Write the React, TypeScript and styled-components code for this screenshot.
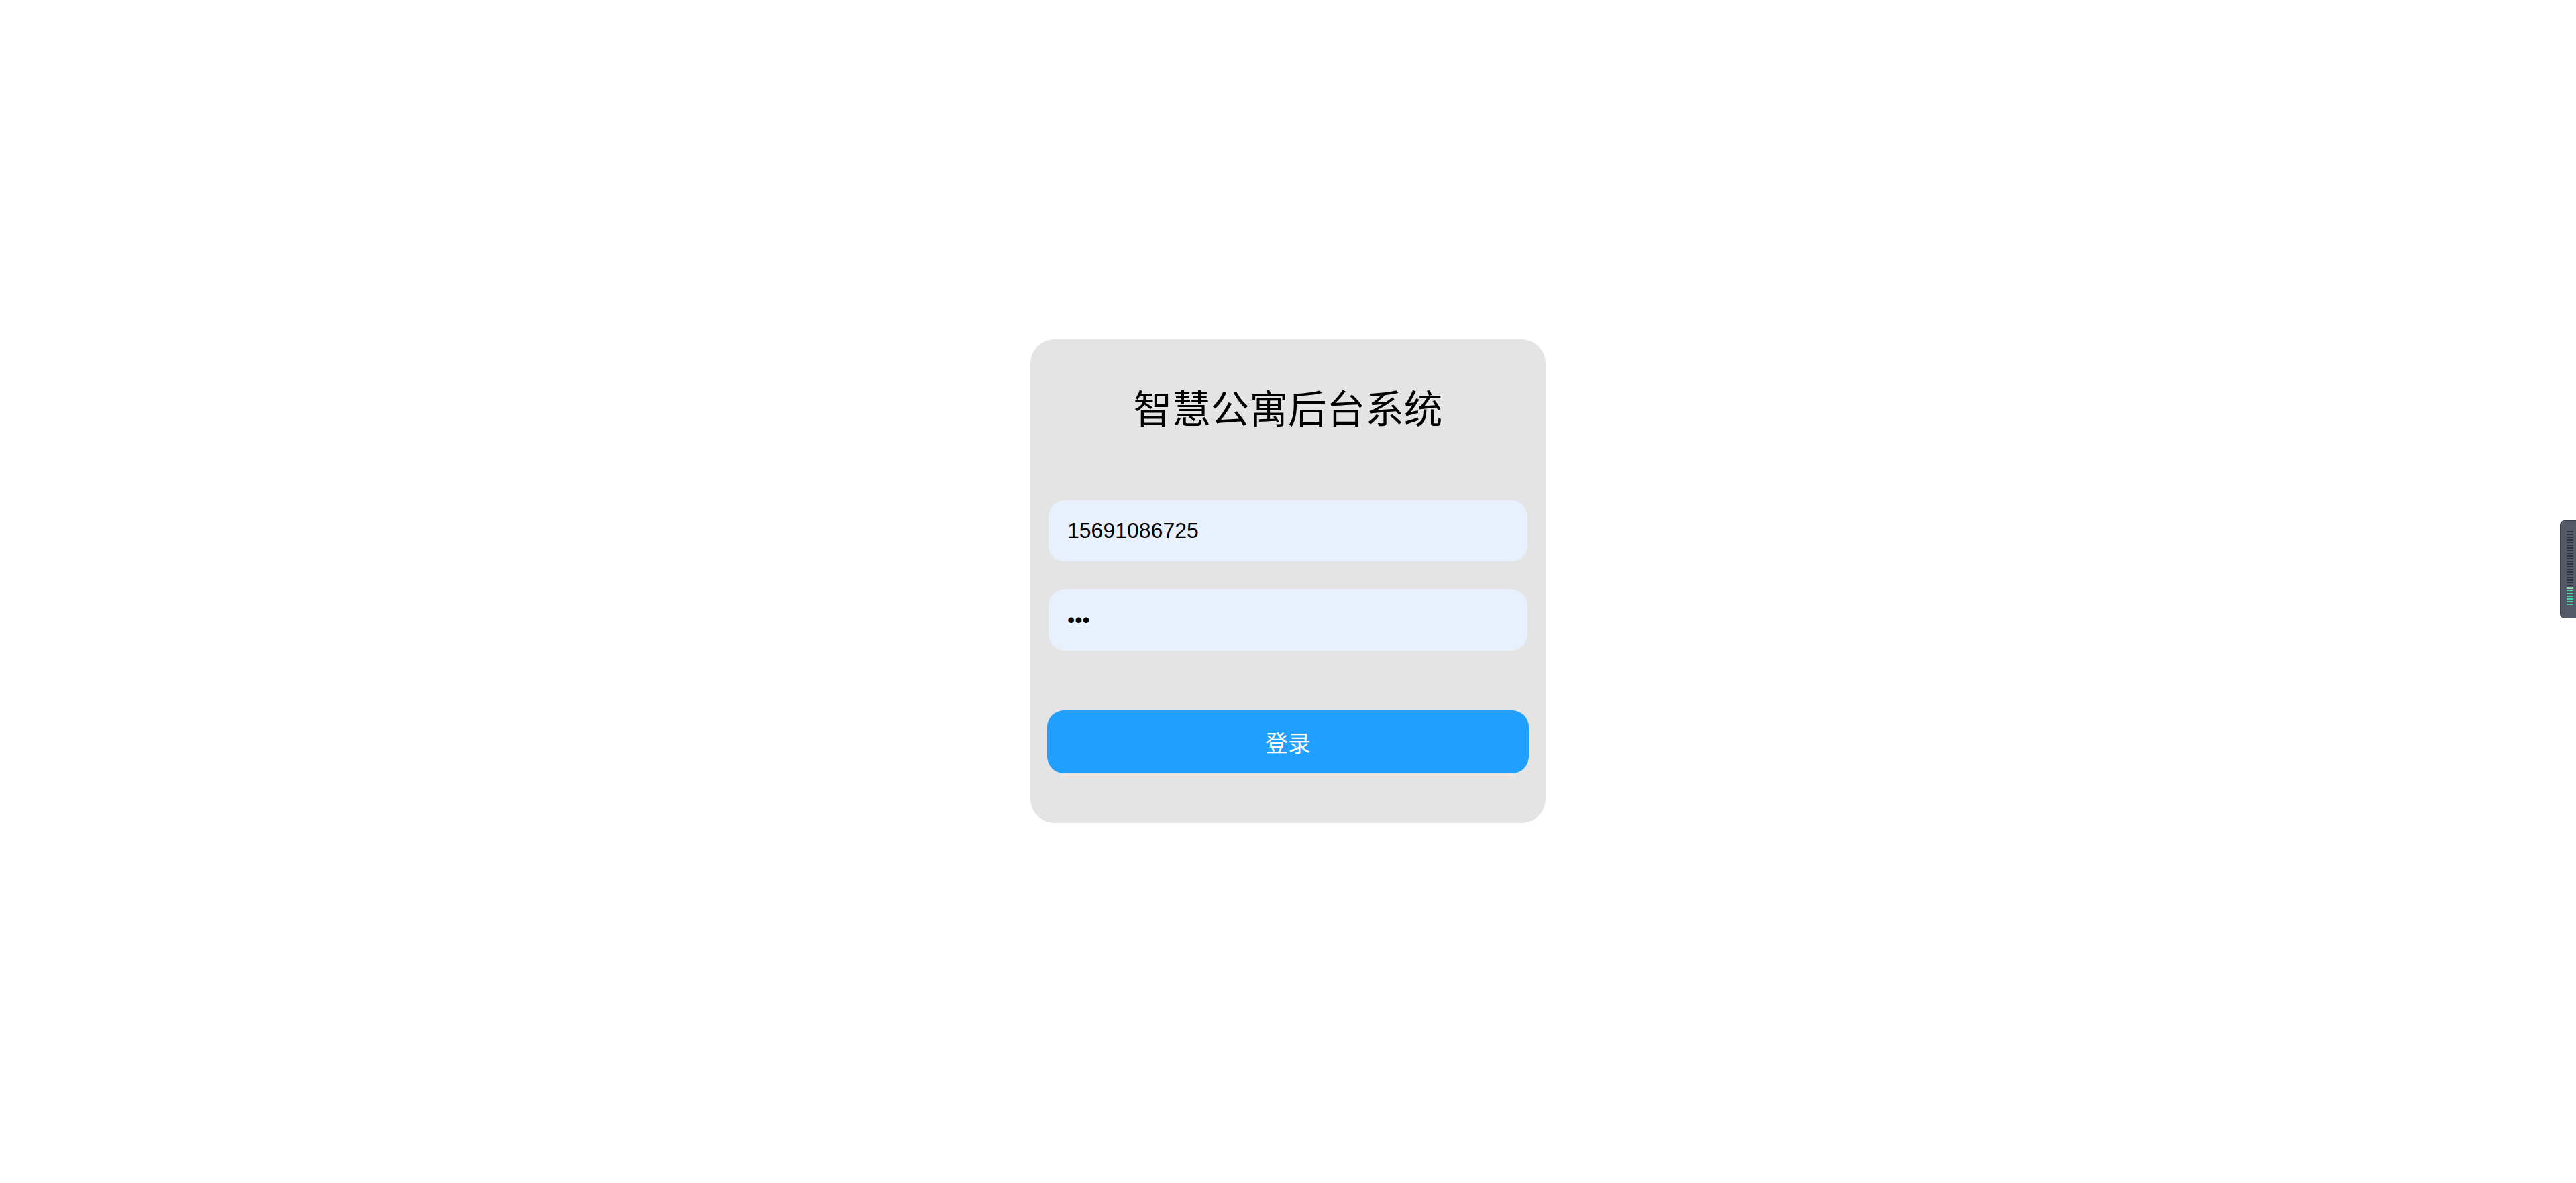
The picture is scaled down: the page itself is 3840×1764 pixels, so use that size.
import * as React from 'react'
import styled, { createGlobalStyle } from 'styled-components'

const GlobalStyle = createGlobalStyle`
  html, body {
    margin: 0;
    padding: 0;
    background: #ffffff;
  }
  body {
    font-family: 'Liberation Sans', 'Noto Sans CJK SC', sans-serif;
  }
`

const Page = styled.div`
  display: flex;
  justify-content: center;
  align-items: flex-start;
  padding-top: 506px;
  min-height: 1764px;
  box-sizing: border-box;
`

const LoginCard = styled.form`
  width: 768px;
  box-sizing: border-box;
  display: flex;
  flex-direction: column;
  padding: 71px 27px 74px;
  background: #e4e4e4;
  border-radius: 36px;
`

const Title = styled.h2`
  margin: 0 0 111px;
  font-family: 'Noto Sans CJK SC', sans-serif;
  font-weight: 400;
  font-size: 57.6px;
  line-height: 58px;
  text-align: center;
  color: #000000;
`

const Fields = styled.div`
  display: flex;
  flex-direction: column;
  gap: 42px;
`

const Field = styled.input`
  height: 91px;
  width: 100%;
  box-sizing: border-box;
  padding: 0 28px;
  border: none;
  outline: none;
  border-radius: 24px;
  background: #e8f0fe;
  font-family: 'Liberation Sans', Arial, sans-serif;
  font-size: 32px;
  color: #000000;
`

const SubmitButton = styled.button`
  margin: 89px -2px 0;
  height: 94px;
  border: none;
  border-radius: 25px;
  background: #1fa0ff;
  color: #ffffff;
  font-family: 'Noto Sans CJK SC', sans-serif;
  font-size: 34px;
  cursor: pointer;
`

const MeterWidget = styled.div`
  position: fixed;
  right: 0;
  top: 776px;
  width: 24px;
  height: 146px;
  box-sizing: border-box;
  padding: 15px 4px 0 9px;
  background: #555a68;
  border: 1px solid #3b3f49;
  border-right: none;
  border-radius: 7px 0 0 7px;
  display: flex;
  flex-direction: column;
  gap: 2px;
`

const MeterBar = styled.div<{ $lit?: boolean; $top?: boolean }>`
  height: 2px;
  width: 10px;
  background: ${props =>
    props.$lit ? (props.$top ? '#86d9a3' : '#4fd1a6') : '#30333b'};
`

export default function App() {
  const bars = Array.from({ length: 28 }, (_, i) => i)
  return (
    <>
      <GlobalStyle />
      <Page>
        <LoginCard onSubmit={e => e.preventDefault()}>
          <Title>智慧公寓后台系统</Title>
          <Fields>
            <Field type="text" defaultValue="15691086725" readOnly />
            <Field type="password" defaultValue="123" readOnly />
          </Fields>
          <SubmitButton type="submit">登录</SubmitButton>
        </LoginCard>
      </Page>
      <MeterWidget>
        {bars.map(i => (
          <MeterBar key={i} $lit={i >= 21} $top={i === 21} />
        ))}
      </MeterWidget>
    </>
  )
}
